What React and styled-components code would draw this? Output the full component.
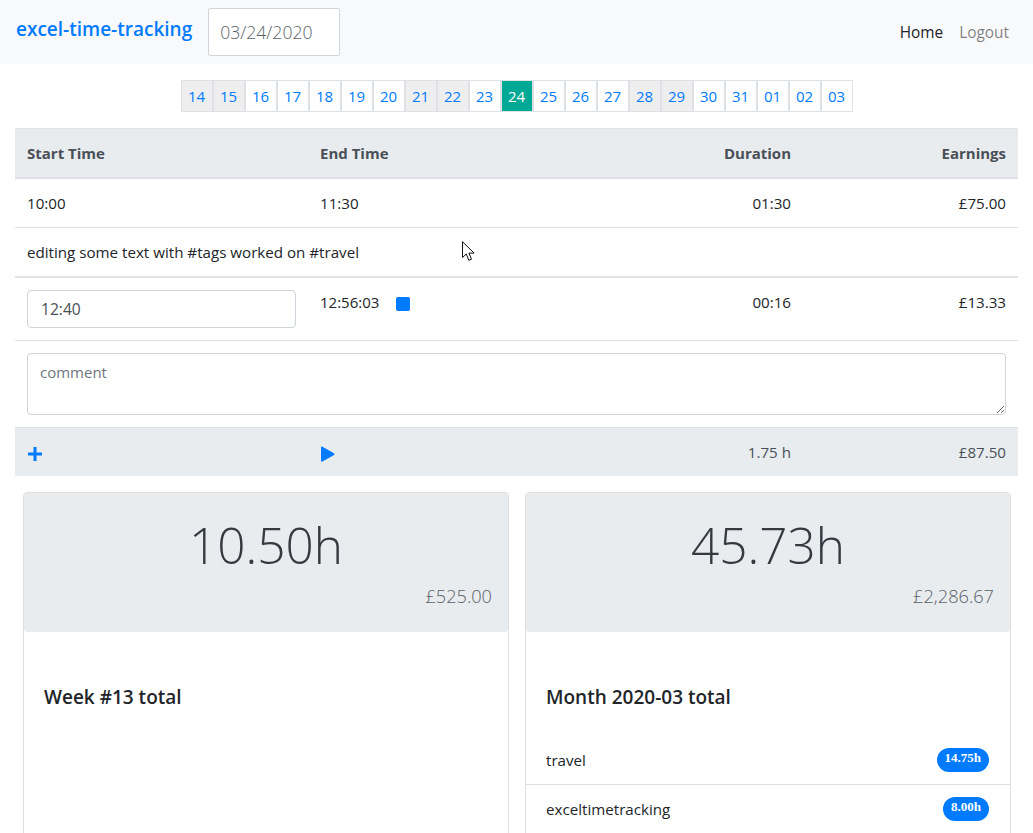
import styled, { createGlobalStyle } from 'styled-components'

const GlobalStyle = createGlobalStyle`
  * {
    box-sizing: border-box;
  }

  html,
  body {
    margin: 0;
    height: 833px;
    overflow: hidden;
  }

  body {
    background: #fff;
    color: #212529;
    font-family: 'Open Sans', 'Liberation Sans', sans-serif;
    font-size: 15.15px;
    line-height: 24px;
  }
`

const Navbar = styled.nav`
  display: flex;
  align-items: center;
  height: 64px;
  padding: 0 16px;
  background-color: #f8f9fa;
`

const Brand = styled.a`
  margin-right: 16px;
  margin-top: -6px;
  color: #007bff;
  font-size: 19px;
  font-weight: 600;
`

const DateInput = styled.input`
  width: 132px;
  height: 48px;
  padding: 8px 11px;
  border: 1px solid #ced4da;
  border-radius: 2px;
  background: #fff;
  color: #5a6268;
  font-family: inherit;
  font-size: 17.6px;
  font-weight: 300;
  outline: none;
`

const NavLinks = styled.div`
  display: flex;
  gap: 16px;
  margin-left: auto;
  padding: 1px 8px 0 0;
  font-size: 15.4px;
`

const NavLink = styled.a`
  color: ${(props) => (props.active ? '#212529' : 'rgba(0, 0, 0, 0.5)')};
`

const Pagination = styled.div`
  display: flex;
  justify-content: center;
  margin: 16px 0;
`

const PageItem = styled.a`
  display: flex;
  align-items: center;
  justify-content: center;
  width: 32px;
  height: 32px;
  border: 1px solid #dee2e6;
  background-color: ${(props) =>
    props.current ? '#00a896' : props.weekend ? '#eeeeee' : '#fff'};
  color: ${(props) => (props.current ? '#fff' : '#007bff')};
  font-size: 15px;
`

const Table = styled.table`
  width: 1003px;
  margin-left: 15px;
  border-collapse: collapse;
  table-layout: fixed;
`

const Th = styled.th`
  height: 49px;
  padding: 11px 12px;
  border-top: 1px solid #dee2e6;
  border-bottom: 2px solid #dee2e6;
  background-color: #e9ecef;
  color: #495057;
  font-weight: 700;
  font-size: 15px;
  text-align: ${(props) => (props.right ? 'right' : 'left')};
`

const Td = styled.td`
  padding: 12px;
  vertical-align: top;
  text-align: ${(props) => (props.right ? 'right' : 'left')};
  border-top: ${(props) => (props.thick ? '2px' : '1px')} solid #dee2e6;
  border-top-style: ${(props) => (props.noBorder ? 'none' : 'solid')};
`

const FootCell = styled.td`
  height: 49px;
  padding: 12px;
  border-top: 1px solid #dee2e6;
  background-color: #e9ecef;
  color: #495057;
  text-align: ${(props) => (props.right ? 'right' : 'left')};
`

const TimeInput = styled.input`
  display: block;
  width: 100%;
  height: 38px;
  padding: 6px 13px;
  border: 1px solid #ced4da;
  border-radius: 4px;
  color: #495057;
  font-family: inherit;
  font-size: 15.6px;
  outline: none;
`

const Comment = styled.textarea`
  display: block;
  width: 100%;
  height: 62px;
  padding: 6px 12px;
  border: 1px solid #ced4da;
  border-radius: 4px;
  font-family: inherit;
  font-size: 15px;
  line-height: 24px;
  outline: none;

  &::placeholder {
    color: #6c757d;
  }
`

const Running = styled.span`
  display: flex;
  align-items: center;
  gap: 17px;
  font-size: 15px;
`

const IconWrap = styled.span`
  display: block;
  height: 24px;
  color: #007bff;
`

const Cards = styled.div`
  display: flex;
  gap: 16px;
  padding: 16px 22px 0 23px;
`

const Card = styled.div`
  flex: 1;
  height: 420px;
  border: 1px solid rgba(0, 0, 0, 0.125);
  border-radius: 4px;
`

const CardHeader = styled.div`
  height: 139px;
  padding: 19px 16px;
  background-color: #e9ecef;
  border-radius: 3px;
`

const Hours = styled.div`
  color: #343a40;
  font-size: 49.5px;
  font-weight: 300;
  line-height: 67px;
  text-align: center;
`

const Amount = styled.div`
  margin-top: 5px;
  color: #5a6268;
  font-size: 18.2px;
  font-weight: 300;
  text-align: right;
`

const CardTitle = styled.h5`
  margin: 0;
  padding: 53px 20px 26px;
  font-size: 19px;
  font-weight: 600;
  line-height: 24px;
`

const ListItem = styled.div`
  display: flex;
  align-items: center;
  justify-content: space-between;
  height: 49px;
  padding: 0 21px 0 20px;
  border-top: ${(props) => (props.first ? 'none' : '1px solid rgba(0, 0, 0, 0.125)')};
`

const Badge = styled.span`
  padding: 0 8px 4px;
  border-radius: 12px;
  background-color: #007bff;
  color: #fff;
  font-family: 'Liberation Serif', serif;
  font-size: 13px;
  font-weight: 700;
  line-height: 20px;
`

const Cursor = styled.svg`
  position: absolute;
  top: 241px;
  left: 462px;
`

const days = [
  '14', '15', '16', '17', '18', '19', '20', '21', '22', '23', '24',
  '25', '26', '27', '28', '29', '30', '31', '01', '02', '03',
]
const weekends = ['14', '15', '21', '22', '28', '29']

function App() {
  return (
    <>
      <GlobalStyle />
      <Navbar>
        <Brand>excel-time-tracking</Brand>
        <DateInput defaultValue="03/24/2020" />
        <NavLinks>
          <NavLink active>Home</NavLink>
          <NavLink>Logout</NavLink>
        </NavLinks>
      </Navbar>

      <Pagination>
        {days.map((day) => (
          <PageItem
            key={day}
            current={day === '24'}
            weekend={weekends.includes(day)}
          >
            {day}
          </PageItem>
        ))}
      </Pagination>

      <Table>
        <colgroup>
          <col width="293" />
          <col width="295" />
          <col width="200" />
          <col width="215" />
        </colgroup>
        <thead>
          <tr>
            <Th>Start Time</Th>
            <Th>End Time</Th>
            <Th right>Duration</Th>
            <Th right>Earnings</Th>
          </tr>
        </thead>
        <tbody>
          <tr>
            <Td noBorder>10:00</Td>
            <Td noBorder>11:30</Td>
            <Td noBorder right>01:30</Td>
            <Td noBorder right>£75.00</Td>
          </tr>
          <tr>
            <Td colSpan={4}>editing some text with #tags worked on #travel</Td>
          </tr>
          <tr>
            <Td thick>
              <TimeInput defaultValue="12:40" />
            </Td>
            <Td thick>
              <Running>
                12:56:03
                <IconWrap>
                  <svg width="14" height="24" viewBox="0 0 14 24">
                    <rect x="0" y="7" width="14" height="14" rx="2" fill="currentColor" />
                  </svg>
                </IconWrap>
              </Running>
            </Td>
            <Td thick right>00:16</Td>
            <Td thick right>£13.33</Td>
          </tr>
          <tr>
            <Td colSpan={4}>
              <Comment placeholder="comment" />
            </Td>
          </tr>
          <tr>
            <FootCell>
              <IconWrap>
                <svg width="16" height="24" viewBox="0 0 16 24">
                  <path d="M1 14h14M8 7v14" stroke="currentColor" strokeWidth="3" fill="none" />
                </svg>
              </IconWrap>
            </FootCell>
            <FootCell>
              <IconWrap>
                <svg width="15" height="24" viewBox="0 0 15 24">
                  <path d="M1 7.500c0-.8.8-1.200 1.500-.8l11.500 6.600c.6.4.6 1.200 0 1.600L2.500 21.500C1.800 21.900 1 21.500 1 20.700z" fill="currentColor" />
                </svg>
              </IconWrap>
            </FootCell>
            <FootCell right>1.75 h</FootCell>
            <FootCell right>£87.50</FootCell>
          </tr>
        </tbody>
      </Table>

      <Cards>
        <Card>
          <CardHeader>
            <Hours>10.50h</Hours>
            <Amount>£525.00</Amount>
          </CardHeader>
          <CardTitle>Week #13 total</CardTitle>
        </Card>
        <Card>
          <CardHeader>
            <Hours>45.73h</Hours>
            <Amount>£2,286.67</Amount>
          </CardHeader>
          <CardTitle>Month 2020-03 total</CardTitle>
          <ListItem first>
            travel
            <Badge>14.75h</Badge>
          </ListItem>
          <ListItem>
            exceltimetracking
            <Badge>8.00h</Badge>
          </ListItem>
        </Card>
      </Cards>

      <Cursor width="13" height="21" viewBox="0 0 13 21">
        <path
          d="M0.500 0.700V16.500L4.300 13l2.500 6.300 2.700-1.100-2.600-6.100h5.200z"
          fill="#fff"
          stroke="#111"
          strokeWidth="1"
        />
      </Cursor>
    </>
  )
}

export default App
